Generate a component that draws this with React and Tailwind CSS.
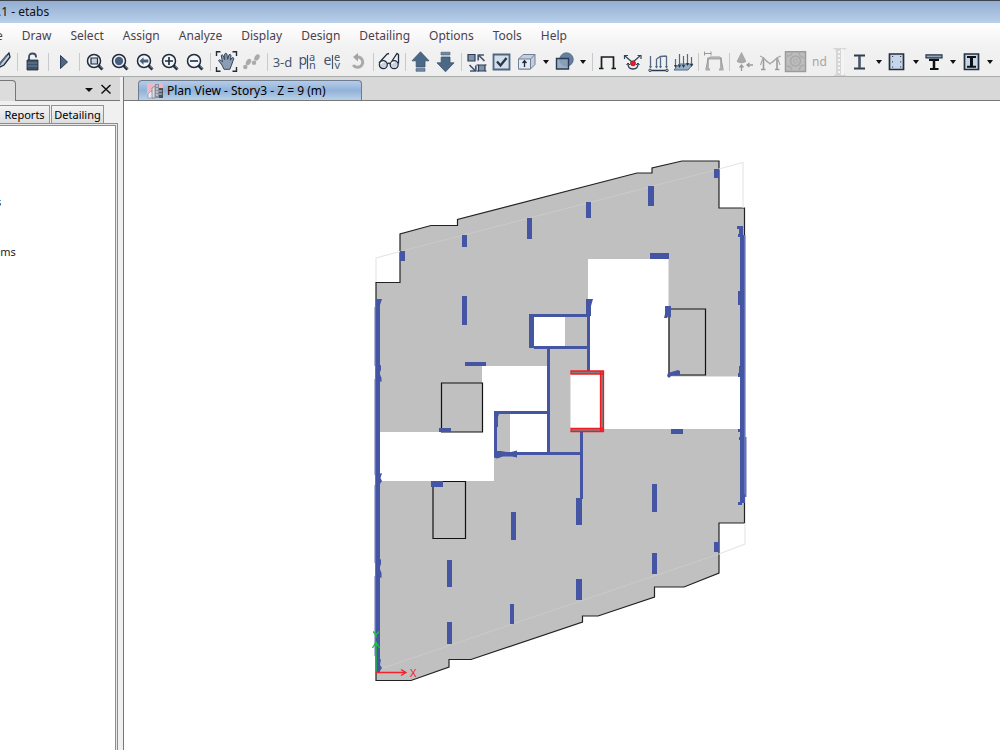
import React from "react";

const MENUS = ["Draw", "Select", "Assign", "Analyze", "Display", "Design", "Detailing", "Options", "Tools", "Help"];

const INK = "#1f2a3a";
const SLATE = "#53677f";
const FADED = "#a6a6a6";

function Icon({ children, w = 25 }) {
  return (
    <svg width={w} height="22" viewBox={`0 0 ${w} 22`} fill="none" className="block shrink-0" aria-hidden="true">
      {children}
    </svg>
  );
}

function Tool({ label, children }) {
  return (
    <button type="button" aria-label={label} className="block w-[25px] shrink-0">
      <Icon>{children}</Icon>
    </button>
  );
}

function Arrow({ label }) {
  return (
    <button type="button" aria-label={label} className="block w-3 shrink-0">
      <Icon w={12}>
        <path d="M3 9h6l-3 4z" fill="#111" />
      </Icon>
    </button>
  );
}

function Sep({ wide }) {
  return (
    <div className={wide ? "flex w-[7px] shrink-0 justify-center" : "flex w-[6px] shrink-0 justify-center"}>
      <div className="my-0.5 w-px bg-[#c9c9c9]" />
    </div>
  );
}

function Lens({ children }) {
  return (
    <>
      <path d="M16.5 14.5l4 4" stroke={INK} strokeWidth="3" />
      <path d="M18 15.2l2.6 2.6" stroke="#7d8da2" strokeWidth="1" />
      <circle cx="12" cy="10" r="6.5" fill="#f2f5f9" stroke={INK} strokeWidth="1.5" />
      {children}
    </>
  );
}

function Toolbar() {
  return (
    <div role="toolbar" aria-label="Main toolbar" className="flex h-7 items-center overflow-hidden">
      <div className="flex h-[22px] shrink-0">
        <button type="button" aria-label="Match properties" className="block w-[14px] shrink-0">
          <Icon w={14}>
            <path d="M9 2L1 11l-3 6 6-3 6-8z" fill="#c5d0de" stroke={INK} strokeWidth="1.3" />
            <path d="M7 4L-1 14" stroke={SLATE} strokeWidth="2" />
          </Icon>
        </button>
        <Sep />
        <Tool label="Unlock model">
          <path d="M9 9V6q0-3.5 3.5-3.5T16 5.500v1" stroke="#3a4960" strokeWidth="1.8" />
          <path d="M7 9h11v10H7z" fill="#3f526b" stroke={INK} strokeWidth=".8" />
          <path d="M7.500 12h10M7.500 15h10" stroke="#6d8098" strokeWidth="1" />
        </Tool>
        <Sep />
        <Tool label="Run analysis">
          <path d="M9.500 4.500v13l7-6.500z" fill="#4d6788" stroke="#2c3d55" strokeWidth="1" />
        </Tool>
        <Sep />
        <Tool label="Rubber band zoom">
          <Lens><path d="M9 7h6.500v6H9z" fill="#c5d0dc" stroke={INK} strokeWidth="1.200" /></Lens>
        </Tool>
        <Tool label="Restore full view">
          <Lens><circle cx="12" cy="10" r="4.200" fill="#48607f" /></Lens>
        </Tool>
        <Tool label="Previous zoom">
          <Lens><path d="M7.500 10l4-3.800v2.300h4.800v3h-4.800v2.300z" fill="#48607f" /></Lens>
        </Tool>
        <Tool label="Zoom in">
          <Lens><path d="M8 10h8M12 6v8" stroke={INK} strokeWidth="1.600" /></Lens>
        </Tool>
        <Tool label="Zoom out">
          <Lens><path d="M8 10h8" stroke={INK} strokeWidth="1.600" /></Lens>
        </Tool>
        <Sep wide />
        <Tool label="Pan">
          <path d="M2.500 5V.8h4M18.500 .8h4V5M2.500 16v4.200h4M18.500 20.200h4V16" stroke={INK} strokeWidth="1.400" />
          <path d="M8 14L4.500 9.500q1-1.500 2.500 0l1.500 1.300L7.200 4.500q1-1.500 2 0l1.500 4.200L10.700 3q1.200-1.500 2.200 0l.7 5.400L15 3.800q1.400-1 2 .4l-.6 5 1.800-2.500q1.500-.4 1.500 1l-2.400 7-1.500 3.600H10z" fill="#8b9db5" stroke="#34445b" strokeWidth="1" />
        </Tool>
        <Tool label="Walk">
          <g fill="#aaa">
            <ellipse cx="9.500" cy="11" rx="2.300" ry="3.500" transform="rotate(32 9.500 11)" />
            <circle cx="6.300" cy="16" r="2.200" />
            <ellipse cx="18" cy="6.500" rx="2.300" ry="3.500" transform="rotate(32 18 6.500)" />
            <circle cx="15" cy="11.800" r="2.200" />
          </g>
        </Tool>
        <Sep />
        <button type="button" className="w-[25px] shrink-0 text-center text-[13px] leading-[22px] text-[#44566e]">3-d</button>
        <Tool label="Set plan view">
          <g fill="#44566e" fontFamily="Noto Sans, sans-serif">
            <text x="3.500" y="14" fontSize="14">p</text>
            <text x="14" y="10" fontSize="11">a</text>
            <text x="14" y="18" fontSize="11">n</text>
          </g>
          <path d="M12.500 4v14" stroke="#44566e" strokeWidth="1.200" />
        </Tool>
        <Tool label="Set elevation view">
          <g fill="#44566e" fontFamily="Noto Sans, sans-serif">
            <text x="3.500" y="14" fontSize="14">e</text>
            <text x="14" y="10" fontSize="11">e</text>
            <text x="14.500" y="18" fontSize="11">v</text>
          </g>
          <path d="M12.500 4v14" stroke="#44566e" strokeWidth="1.200" />
        </Tool>
        <Tool label="Rotate view">
          <path d="M12 6h1.500a5.200 5.200 0 1 1-5.300 8" stroke="#aaa" strokeWidth="3" />
          <path d="M8 6l5-4v8.500z" fill="#a3a3a3" />
        </Tool>
        <Sep wide />
        <Tool label="Object view options">
          <path d="M2 12L10 3l2-.5M15 10l5-7.500 1.500 1v9" stroke={INK} strokeWidth="1.300" />
          <path d="M10 13q1.700-1.800 3.500 0" stroke={INK} strokeWidth="1.300" />
          <circle cx="6.300" cy="13.700" r="4" fill="#c9d2de" stroke={INK} strokeWidth="1.200" />
          <circle cx="17.200" cy="13.700" r="4" fill="#c9d2de" stroke={INK} strokeWidth="1.200" />
          <path d="M3.800 13q1-2 3-2M14.700 13q1-2 3-2" stroke="#fff" strokeWidth="1.200" />
        </Tool>
        <Sep />
        <Tool label="Move up in list">
          <path d="M12.500 .8l8.500 9h-4v6.200H8.200V9.800H4z" fill="#4b6887" stroke="#3b536e" strokeWidth=".8" />
          <path d="M8 17.500h9v2.800H8z" fill="#6f88a3" stroke="#4a6078" strokeWidth=".6" />
        </Tool>
        <Tool label="Move down in list">
          <path d="M12.500 20.800l8.500-9h-4V6H8.200v5.800H4z" fill="#4b6887" stroke="#3b536e" strokeWidth=".8" />
          <path d="M8 1.200h9V4H8z" fill="#6f88a3" stroke="#4a6078" strokeWidth=".6" />
        </Tool>
        <Sep wide />
        <Tool label="Shrink objects">
          <path d="M3 3.500h7v6.500H3zM13.500 14h6.500v6h-6.500z" fill="#8193aa" stroke="#2c3d55" strokeWidth="1.200" />
          <path d="M13 4h6M13.200 3.500v6M13.500 4l6 6M11 20H5M10.800 20.500v-6M10.500 20l-6-6" stroke="#42566f" strokeWidth="1.700" />
          <path d="M11.500 14h2M20 14h1.500M11.800 20h2M20 20h1.500" stroke="#2c3d55" />
        </Tool>
        <Tool label="Set display options">
          <path d="M3.500 3.500h16v15h-16z" fill="#d4deeb" stroke="#506580" strokeWidth="1.800" />
          <path d="M7 10.500l3.500 4L16.500 7" stroke="#263850" strokeWidth="2.400" />
        </Tool>
        <Tool label="Assign view options">
          <path d="M3.500 8L8 3.500h12v10L15.500 18h-12z" fill="#c3ceda" stroke="#6e8198" strokeWidth="1" />
          <path d="M3.500 8h12v10h-12z" fill="#e5ebf2" stroke="#6e8198" strokeWidth="1" />
          <path d="M15.500 8L20 3.500" stroke="#6e8198" />
          <path d="M9.500 16v-6M7.500 12l2-2.300 2 2.300" stroke={INK} strokeWidth="1.300" />
        </Tool>
        <Arrow label="More assign view options" />
        <Tool label="Shade options">
          <circle cx="14.500" cy="8.500" r="6.800" fill="#63809f" stroke="#48617e" strokeWidth=".7" />
          <path d="M4.500 7.500h12v10.500h-12z" fill="#8fa3bb" fillOpacity=".85" stroke="#293b54" strokeWidth="1.400" />
        </Tool>
        <Arrow label="More shade options" />
        <Sep />
        <Tool label="Frame releases">
          <path d="M6.500 17V6h12v11M4 17.500h4.500M16.500 17.500H21" stroke="#171c24" strokeWidth="1.700" />
        </Tool>
        <Tool label="Joint loads">
          <path d="M5 5l7 6M20 5l-7 6" stroke="#34465e" strokeWidth="1.300" />
          <path d="M4.500 8V4.500H8M17.500 4.500H21V8" stroke="#34465e" strokeWidth="1.200" />
          <path d="M8 13q0 5 5 5t5-5" stroke="#263850" strokeWidth="1.300" />
          <path d="M6.500 14l1.500-2 2 2M16 14l2-2 1.500 2" stroke="#263850" strokeWidth="1" />
          <circle cx="13" cy="12.300" r="2.600" fill="#e71b20" stroke="#7d1b25" strokeWidth=".6" />
        </Tool>
        <Tool label="Frame loads">
          <path d="M5.500 5v12M11.500 8v9M15.500 6.500V17M21.500 5v12M11.500 8l4-2.500 6-.5" stroke="#536984" strokeWidth="1.300" />
          <path d="M4 15l1.500 2.500L7 15zM10 15l1.500 2.500L13 15zM14 15l1.500 2.500L17 15zM20 15l1.500 2.500L23 15z" fill="#536984" />
          <path d="M4 19.500h19" stroke="#263850" strokeWidth="1.500" />
          <circle cx="5" cy="19.300" r="1.200" fill="#fff" stroke="#263850" />
          <circle cx="22" cy="19.300" r="1.200" fill="#fff" stroke="#263850" />
        </Tool>
        <Tool label="Shell loads">
          <path d="M4 19l5-6h14l-5 6z" fill="#9dafc4" stroke="#536984" strokeWidth="1" />
          <path d="M5.500 8v8M9.500 3v13M13.500 5v11M17.500 3v11M21.500 6v9" stroke="#536984" strokeWidth="1.200" />
          <path d="M4 14l1.500 3 1.500-3zM8 14l1.500 3 1.500-3zM12 14l1.500 3 1.500-3zM16 12l1.500 3 1.500-3zM20 13l1.500 3 1.500-3z" fill="#263850" />
        </Tool>
        <Sep />
        <Tool label="Show undeformed shape">
          <path d="M3.500 .5v4M10 .5v4M3.500 2.500H10" stroke="#999" strokeWidth="1" />
          <path d="M7 18V7.500h13V18M4.500 18.500H9M18 18.500h4.500" stroke="#aaa" strokeWidth="1.800" />
          <path d="M5 18l2-10 2-2h10l1 2 2 10" stroke="#999" strokeWidth="1" />
        </Tool>
        <Sep />
        <Tool label="Show loads">
          <path d="M9.500 1.500l4.500 9q-4.500 3-9 0z" fill="#aaa" stroke="#999" strokeWidth=".6" />
          <path d="M9.500 20v-5M7.500 16.500l2-2.500 2 2.500M21 14h-5M17.500 12L15 14l2.500 2" stroke="#999" strokeWidth="1.300" />
        </Tool>
        <Tool label="Show forces">
          <path d="M6.500 18V7M20 18V7M4 18.500h4.500M18 18.500h4.500" stroke="#9b9b9b" strokeWidth="1.600" />
          <path d="M3 5l4 2q6 10 12.500 0l4.500-2M6 7L3.500 14M20.500 7L23 14M6.500 7l6.500 6 7-6" stroke={FADED} strokeWidth="1.100" />
        </Tool>
        <Tool label="Show stresses">
          <path d="M3.500 .8h20v19.800h-20z" fill="#bdbdbd" stroke="#9b9b9b" strokeWidth="1.500" />
          <circle cx="13.500" cy="10" r="5" stroke="#a8a8a8" strokeWidth="1.500" />
          <circle cx="13.500" cy="10" r="2" stroke="#adadad" />
          <path d="M5 5q4 0 5-3M17 2q1 4 5 5M5 15q4 0 5 4M17 19q1-4 5-5" stroke="#aaa" strokeWidth="1.300" />
        </Tool>
        <button type="button" aria-label="nd" className="w-[25px] shrink-0 text-center text-xs leading-[22px] text-[#a5a5a5]">nd</button>
      </div>
      <svg width="16" height="28" viewBox="0 0 16 28" className="block shrink-0" aria-hidden="true">
        <path d="M0 0h15q-3 1-3 4v20q0 3 3 4H1q3-1 3-4V4Q4 1 0 0z" fill="#d6d6d6" />
        <path d="M9 1h3v26H9z" fill="#f4f4f4" />
        <path d="M7 3v22" stroke="#fff" strokeWidth="1.500" strokeDasharray="2 2" />
      </svg>
      <div className="flex h-[22px] shrink-0">
        <Tool label="Steel frame design">
          <path d="M6 4.500h11M6 17.500h11" stroke="#313c4c" strokeWidth="2" />
          <path d="M11.500 5v12" stroke="#46566c" strokeWidth="2.600" />
        </Tool>
        <Arrow label="Steel frame design menu" />
        <Tool label="Concrete frame design">
          <path d="M4.500 3h14v15.500h-14z" fill="#c7d5e8" stroke="#252f3d" strokeWidth="1.700" />
          <path d="M7 5.500h1.200M15 5.500h1.200M7 16h1.200M15 16h1.200M7 10.800h1M15.200 10.800h1" stroke="#34445b" strokeWidth="1.200" />
        </Tool>
        <Arrow label="Concrete frame design menu" />
        <Tool label="Composite beam design">
          <path d="M4 3.800h16v3H4z" fill="#91a5bd" stroke="#2a3545" strokeWidth="1.200" />
          <path d="M7 8.800h10M8 18h8.500" stroke="#0e1116" strokeWidth="2.200" />
          <path d="M12 9v9" stroke="#0e1116" strokeWidth="2.500" />
        </Tool>
        <Arrow label="Composite beam design menu" />
        <Tool label="Composite column design">
          <path d="M5.500 3h14v15.500h-14z" fill="#c7d5e8" stroke="#252f3d" strokeWidth="1.700" />
          <path d="M8 6h9M8 15.800h9" stroke="#0e1116" strokeWidth="2" />
          <path d="M12.500 6v9.500" stroke="#0e1116" strokeWidth="3" />
        </Tool>
        <Arrow label="Composite column design menu" />
      </div>
    </div>
  );
}

const COLUMNS = [
  [400, 251, 5, 10], [462, 235, 5, 12], [527, 218, 5, 21], [586, 202, 5, 16], [648, 186, 6, 20],
  [714, 169, 5, 9], [650, 253, 19, 6], [462, 296, 5, 29], [465, 362, 21, 4], [439, 428, 12, 4],
  [431, 481, 12, 6], [511, 512, 5, 28], [447, 560, 5, 27], [447, 622, 5, 22], [510, 604, 4, 20],
  [576, 498, 6, 27], [576, 579, 6, 21], [652, 484, 5, 28], [652, 553, 5, 21], [714, 542, 5, 10],
  [671, 429, 12, 5],
];

const WALLS = [
  [376, 300, 4, 372], [740, 235, 4, 268],
  [529, 314, 60, 3], [529, 314, 5, 34], [534, 346, 55, 3], [547, 348, 3, 106],
  [587, 300, 3, 72], [494, 411, 54, 3], [494, 425, 3, 29], [494, 452, 88, 3], [580, 431, 3, 68],
];

function PlanDrawing() {
  return (
    <svg viewBox="124 101 876 649" preserveAspectRatio="xMinYMin meet" className="block h-auto w-full" role="img" aria-label="Story3 floor plan">
      <path
        d="M376 282.500H400V234L431 225.500H457.500V219.500L637 173H652V168L682 161H719V208H744.500V523H719V573L684 587H654.500V597L598 616H582.500V622L471 659.500H449V667L411 680.500H376z"
        fill="#c0c0c0" stroke="#222" strokeWidth="1.200"
      />
      <g fill="#fff">
        <path d="M588 259H668.500V376.500H742V429H603V431H570.500V374H588z" />
        <path d="M482 366H547V412H494V481H380V432H482z" />
        <path d="M533 317h32v30h-32zM510 414h37v38h-37z" />
      </g>
      <path d="M376 282V258L400 251.500M719 169L743 162.500V208M719 554L745 544V523" fill="none" stroke="#e6e6e6" strokeWidth="1.200" />
      <path d="M400 251.500L719 169M380 669L719 554" fill="none" stroke="#cacaca" strokeWidth="1" />
      <g fill="#c0c0c0" stroke="#111" strokeWidth="1.200">
        <path d="M669 309h36.500v66H669zM441.500 383h41v49h-41zM433 481.500h32.500v57H433z" />
      </g>
      <g fill="#6673b6">
        <path d="M374.500 307h2.500v59h-2.500zM374.500 379h2.500v96h-2.500zM374.500 485h2.500v78h-2.500zM374.500 576h2.500v80h-2.500zM743 235h2.500v202H743zM743 437h3.500v60H743z" />
      </g>
      <g fill="#4455a4">
        {[...WALLS, ...COLUMNS].map(([x, y, w, h]) => (
          <rect key={`${x}-${y}-${w}`} x={x} y={y} width={w} height={h} />
        ))}
        <path d="M376 299h6l-2 6h-4zM376 367l5-2v5l-1.500 3 2 5v4l-5-2zM376 475l6-2-1.500 5 1.500 3-2 3h-4zM376 562l5-3v5l-1.500 4 2 5v5l-5-2zM376 661l5-2-1 6 2 3-3 4h-3z" />
        <path d="M737 226h6v11h-5v-3h1v-5h-2zM738 291h4v14h-4zM739 366h4v11h-5v-4h1zM738 429h5v11h-4v-3h1v-5h-2zM740 494h5v9h-3v2h-4v-3h2z" />
        <path d="M586 299h7l-2 7v10h-5zM665 306h6v12l-2-3-2 3h-3l1-4zM668 373l10-3 2 1v4h-8l-3 3-2-2z" />
        <path d="M494 411h6l-2 6v10h-4zM494 451h7l8 1.500 8-2v7l-5-1h-9l-6 2-3-1z" />
        <path d="M376 638h3v34h-3z" />
      </g>
      <g fill="#7f7f7f" stroke="#ee1c22" strokeWidth="1.300">
        <path d="M571 371h32v3h-32zM571 428.500h32v3h-32zM600.500 371h3v60h-3z" />
      </g>
      <path d="M376 672V643M372.500 648l3.500-6 3.500 6M373 631.500l3 3.500 3-3.500M376 635v3" fill="none" stroke="#16c532" strokeWidth="1.300" />
      <path d="M374 646l2-4 2 4z" fill="#16c532" />
      <path d="M376 672.500H406M401 669.500l5 3-5 3" fill="none" stroke="#f3222a" strokeWidth="1.300" />
      <text x="410" y="677" fontSize="11" fontFamily="Noto Sans, sans-serif" fill="#f3222a">X</text>
    </svg>
  );
}

function Explorer() {
  return (
    <aside aria-label="Model explorer" className="flex w-[120px] shrink-0 flex-col bg-[#f0f0f0]">
      <header className="flex h-6 shrink-0 border-b border-[#777] bg-[#d8d8d8]">
        <div className="mt-[3px] -mb-px w-4 rounded-tr border-t border-r border-[#777] bg-[#dcdcdc]" />
        <div className="flex flex-1 items-center justify-end gap-[6px] pr-2">
          <button type="button" aria-label="Panel menu">
            <svg width="10" height="12" viewBox="0 0 10 12" className="block"><path d="M1 5h8L5 9z" fill="#111" /></svg>
          </button>
          <button type="button" aria-label="Close panel">
            <svg width="12" height="12" viewBox="0 0 12 12" className="block"><path d="M1.500 2l9 8.500M10.500 2l-9 8.500" stroke="#111" strokeWidth="1.500" /></svg>
          </button>
        </div>
      </header>
      <div role="tablist" className="flex h-[22px] shrink-0 items-end gap-px text-[11px] leading-[18px] text-black">
        <button role="tab" type="button" className="h-[18px] w-[50px] border-r border-t border-[#8f939b] bg-linear-to-b from-[#f4f4f4] to-[#dddddd]">Reports</button>
        <button role="tab" type="button" className="h-[18px] w-[53px] border-x border-t border-[#8f939b] bg-linear-to-b from-[#f4f4f4] to-[#dddddd]">Detailing</button>
      </div>
      <div className="mr-[2px] flex flex-1 flex-col border-t border-r border-[#8a8d92] bg-[#e8e8e8] pt-px pr-px">
        <ul className="flex flex-1 flex-col gap-[34px] border-t border-r border-[#8a8d92] bg-white pt-[68px] text-[11px] leading-4 text-[#222]">
          <li className="-ml-1">s</li>
          <li className="-ml-1.5">ems</li>
        </ul>
      </div>
    </aside>
  );
}

export default function App() {
  return (
    <div className="flex min-h-screen flex-col overflow-hidden bg-[#f0f0f0] font-['Noto_Sans',sans-serif] text-xs">
      <h1 className="h-[23px] shrink-0 border-t border-[#3c424c] bg-linear-to-b from-[#93aed2] to-[#b9d0ea] leading-[22px] text-[#111]"><span className="-ml-0.5">.1 - etabs</span></h1>
      <div className="shrink-0 border-b border-[#a8adab] bg-linear-to-b from-white via-[#f1f1f1] to-[#efefef]">
        <nav aria-label="Main menu" className="flex h-[25px] items-center gap-[19px] overflow-hidden text-[#4b3f4f]">
          <button type="button" className="-ml-1">e</button>
          {MENUS.map((name) => (
            <button key={name} type="button">{name}</button>
          ))}
        </nav>
        <Toolbar />
      </div>
      <div className="flex flex-1">
        <Explorer />
        <main className="ml-[3px] flex min-w-0 flex-1 flex-col border-l border-[#777] bg-white">
          <div role="tablist" className="flex h-6 shrink-0 items-end border-b border-[#777] bg-[#d8d8d8] pl-[14px]">
            <button role="tab" type="button" aria-selected="true" className="flex h-5 w-[224px] items-center gap-[3px] rounded-t border border-b-0 border-[#6f7c8e] bg-linear-to-b from-[#b4cce9] via-[#92b2d8] to-[#b9d0ea] pl-2 text-black">
              <svg width="17" height="17" viewBox="0 0 17 17" className="block shrink-0" aria-hidden="true">
                <path d="M0 1h16v11H0z" fill="#efb6c4" />
                <path d="M1 12l3-3 2 2v5H1z" fill="#e9eaf0" stroke="#8a8d99" strokeWidth=".6" />
                <path d="M5 6l3-2v12H5z" fill="#d9dbe2" stroke="#676b78" strokeWidth=".6" />
                <path d="M8 2h4v14H8z" fill="#8a8e9a" />
                <path d="M9 4h2M9 7h2M9 10h2M9 13h2" stroke="#eef0f4" />
                <path d="M12 6h4v10h-4z" fill="#4d515c" />
                <path d="M12 9h3M12 12h3" stroke="#d3d6de" />
              </svg>
              <span className="whitespace-nowrap">Plan View - Story3 - Z = 9 (m)</span>
            </button>
          </div>
          <PlanDrawing />
        </main>
      </div>
    </div>
  );
}
